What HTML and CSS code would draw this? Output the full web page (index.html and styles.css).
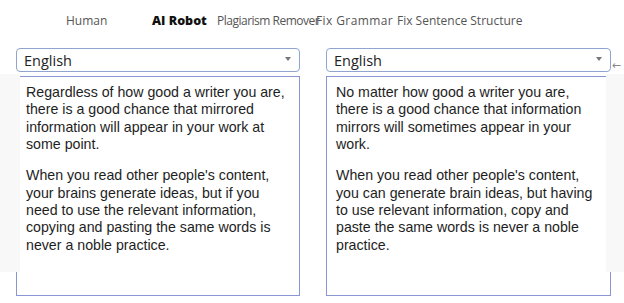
FILE: index.html
```html
<!DOCTYPE html>
<html lang="en">
<head>
<meta charset="utf-8">
<title>Paraphraser</title>
<link rel="stylesheet" href="styles.css">
</head>
<body>
<div class="page">
  <nav class="tabs">
    <span class="tab tab-human">Human</span>
    <span class="tab tab-ai active">AI Robot</span>
    <span class="tab tab-plag">Plagiarism Remover</span>
    <span class="tab tab-gram">Fix Grammar</span>
    <span class="tab tab-sent">Fix Sentence Structure</span>
  </nav>
  <div class="editors">
    <div class="col col-left">
      <div class="select"><span>English</span><i class="caret"></i></div>
      <div class="box">
        <p>Regardless of how good a writer you are,<br>there is a good chance that mirrored<br>information will appear in your work at<br>some point.</p>
        <p>When you read other people's content,<br>your brains generate ideas, but if you<br>need to use the relevant information,<br>copying and pasting the same words is<br>never a noble practice.</p>
      </div>
    </div>
    <div class="col col-right">
      <div class="select"><span>English</span><i class="caret"></i></div>
      <div class="box">
        <p>No matter how good a writer you are,<br>there is a good chance that information<br>mirrors will sometimes appear in your<br>work.</p>
        <p>When you read other people's content,<br>you can generate brain ideas, but having<br>to use relevant information, copy and<br>paste the same words is never a noble<br>practice.</p>
      </div>
      <span class="back">&#8592;</span>
    </div>
  </div>
  <div class="shade shade-left"></div>
  <div class="shade shade-right"></div>
</div>
</body>
</html>
```
FILE: styles.css
```css
html, body {
  margin: 0;
  padding: 0;
  background: #ffffff;
}
.page {
  position: relative;
  width: 624px;
  height: 303px;
  overflow: hidden;
  font-family: "Open Sans", "Noto Sans", sans-serif;
}
.tabs {
  display: flex;
  padding: 12px 0 0 66px;
  height: 24px;
  font-size: 12px;
  line-height: 18px;
  color: #555555;
  white-space: nowrap;
}
.tab {
  flex: none;
  overflow: visible;
}
.tab-human { width: 86px; }
.tab-ai { width: 65px; }
.tab-plag { width: 99px; letter-spacing: -0.5px; }
.tab-gram { width: 81px; letter-spacing: 0.4px; }
.active {
  font-size: 12.5px;
  font-weight: 800;
  color: #111111;
}
.editors {
  display: flex;
  gap: 26px;
  padding: 12px 0 0 16px;
}
.col {
  position: relative;
  display: flex;
  flex-direction: column;
  gap: 4px;
}
.col-left { width: 284px; }
.col-right { width: 285px; }
.select {
  height: 22px;
  border: 1px solid #8fa5cf;
  border-radius: 4px;
  display: flex;
  align-items: center;
  justify-content: space-between;
  padding: 0 8px 0 7px;
  font-size: 14.5px;
  color: #222222;
}
.caret {
  width: 0;
  height: 0;
  border-left: 3.5px solid transparent;
  border-right: 3.5px solid transparent;
  border-top: 4px solid #777777;
  margin-top: -2px;
}
.box {
  height: 211px;
  border: 1px solid #8a96d4;
  padding: 7px 8px 0 9px;
  font-family: "Liberation Sans", Arial, sans-serif;
  font-size: 14.2px;
  line-height: 17.4px;
  color: #1e1e1e;
  white-space: nowrap;
}
.box p {
  margin: 0 0 13.5px 0;
}
.back {
  position: absolute;
  right: -10px;
  top: 11px;
  font-size: 11px;
  color: #888888;
  font-family: "DejaVu Sans", sans-serif;
}
.shade {
  position: absolute;
  top: 74px;
  height: 198px;
  background: #f8f8f9;
}
.shade-left {
  left: 0;
  width: 20px;
}
.shade-right {
  left: 606px;
  width: 18px;
}
```
